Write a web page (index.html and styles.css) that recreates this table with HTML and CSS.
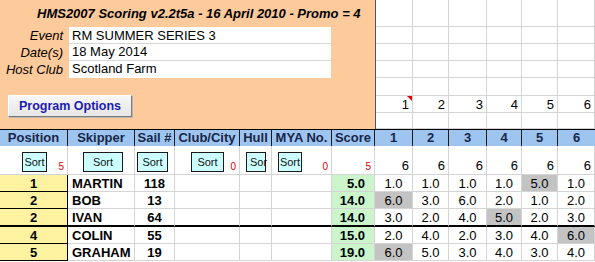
FILE: index.html
```html
<!DOCTYPE html>
<html lang="en">
<head>
<meta charset="utf-8">
<title>HMS2007 Scoring</title>
<link rel="stylesheet" href="styles.css">
</head>
<body>
<div class="sheet">
  <div class="top">
    <div class="panel">
      <div class="title">HMS2007 Scoring v2.2t5a - 16 April 2010 - Promo = 4</div>
      <div class="info">
        <div class="info-row"><span class="label">Event</span><span class="value">RM SUMMER SERIES 3</span></div>
        <div class="info-row"><span class="label">Date(s)</span><span class="value">18 May 2014</span></div>
        <div class="info-row"><span class="label">Host Club</span><span class="value">Scotland Farm</span></div>
      </div>
      <button class="options">Program Options</button>
    </div>
    <div class="races">
      <div class="gc"></div><div class="gc"></div><div class="gc"></div><div class="gc"></div><div class="gc"></div><div class="gc"></div>
      <div class="gc"></div><div class="gc"></div><div class="gc"></div><div class="gc"></div><div class="gc"></div><div class="gc"></div>
      <div class="gc"></div><div class="gc"></div><div class="gc"></div><div class="gc"></div><div class="gc"></div><div class="gc"></div>
      <div class="gc"></div><div class="gc"></div><div class="gc"></div><div class="gc"></div><div class="gc"></div><div class="gc"></div>
      <div class="gc"></div><div class="gc"></div><div class="gc"></div><div class="gc"></div><div class="gc"></div><div class="gc"></div>
      <div class="gc num comment">1</div><div class="gc num">2</div><div class="gc num">3</div><div class="gc num">4</div><div class="gc num">5</div><div class="gc num">6</div>
      <div class="gc"></div><div class="gc"></div><div class="gc"></div><div class="gc"></div><div class="gc"></div><div class="gc"></div>
    </div>
  </div>

  <div class="table">
    <div class="row head">
      <div class="hc">Position</div>
      <div class="hc">Skipper</div>
      <div class="hc">Sail #</div>
      <div class="hc">Club/City</div>
      <div class="hc">Hull</div>
      <div class="hc">MYA No.</div>
      <div class="hc">Score</div>
      <div class="hc">1</div>
      <div class="hc">2</div>
      <div class="hc">3</div>
      <div class="hc">4</div>
      <div class="hc">5</div>
      <div class="hc">6</div>
    </div>

    <div class="row sorts">
      <div class="sc"><button class="sort btn-pos">Sort</button><span class="mark">5</span></div>
      <div class="sc"><button class="sort btn-skip">Sort</button></div>
      <div class="sc"><button class="sort btn-sail">Sort</button></div>
      <div class="sc"><button class="sort btn-club">Sort</button><span class="mark">0</span></div>
      <div class="sc"><button class="sort btn-hull">Sor</button></div>
      <div class="sc"><button class="sort btn-mya">Sort</button><span class="mark">0</span></div>
      <div class="sc"><span class="mark">5</span></div>
      <div class="sc"><span class="count">6</span></div>
      <div class="sc"><span class="count">6</span></div>
      <div class="sc"><span class="count">6</span></div>
      <div class="sc"><span class="count">6</span></div>
      <div class="sc"><span class="count">6</span></div>
      <div class="sc"><span class="count">6</span></div>
    </div>

    <div class="row data">
      <div class="c pos">1</div><div class="c name">MARTIN</div><div class="c sail">118</div>
      <div class="c"></div><div class="c"></div><div class="c"></div><div class="c score">5.0</div>
      <div class="c r">1.0</div><div class="c r">1.0</div><div class="c r">1.0</div><div class="c r">1.0</div><div class="c r drop">5.0</div><div class="c r">1.0</div>
    </div>
    <div class="row data">
      <div class="c pos">2</div><div class="c name">BOB</div><div class="c sail">13</div>
      <div class="c"></div><div class="c"></div><div class="c"></div><div class="c score">14.0</div>
      <div class="c r drop">6.0</div><div class="c r">3.0</div><div class="c r">6.0</div><div class="c r">2.0</div><div class="c r">1.0</div><div class="c r">2.0</div>
    </div>
    <div class="row data split">
      <div class="c pos">2</div><div class="c name">IVAN</div><div class="c sail">64</div>
      <div class="c"></div><div class="c"></div><div class="c"></div><div class="c score">14.0</div>
      <div class="c r">3.0</div><div class="c r">2.0</div><div class="c r">4.0</div><div class="c r drop">5.0</div><div class="c r">2.0</div><div class="c r">3.0</div>
    </div>
    <div class="row data">
      <div class="c pos">4</div><div class="c name">COLIN</div><div class="c sail">55</div>
      <div class="c"></div><div class="c"></div><div class="c"></div><div class="c score">15.0</div>
      <div class="c r">2.0</div><div class="c r">4.0</div><div class="c r">2.0</div><div class="c r">3.0</div><div class="c r">4.0</div><div class="c r drop">6.0</div>
    </div>
    <div class="row data">
      <div class="c pos">5</div><div class="c name">GRAHAM</div><div class="c sail">19</div>
      <div class="c"></div><div class="c"></div><div class="c"></div><div class="c score">19.0</div>
      <div class="c r drop">6.0</div><div class="c r">5.0</div><div class="c r">3.0</div><div class="c r">4.0</div><div class="c r">3.0</div><div class="c r">4.0</div>
    </div>
  </div>
</div>
</body>
</html>
```

FILE: styles.css
```css
* { box-sizing: border-box; }

html, body {
  margin: 0;
  padding: 0;
  background: #ffffff;
}

.sheet {
  width: 595px;
  height: 262px;
  overflow: hidden;
  font-family: "Liberation Sans", Arial, sans-serif;
  font-size: 13px;
  color: #000;
}

/* ---------- upper block: orange event panel + race number grid ---------- */
.top {
  display: flex;
  height: 129px;
}

.panel {
  width: 376px;
  flex: none;
  background: #fdca9b;
  border-right: 1px solid #555;
  display: flex;
  flex-direction: column;
  align-items: flex-start;
}

.title {
  height: 27px;
  padding: 7px 0 0 37px;
  font-weight: bold;
  font-style: italic;
  font-size: 13px;
  line-height: 13px;
  white-space: nowrap;
}

.info {
  display: flex;
  flex-direction: column;
}

.info-row {
  display: flex;
  height: 17px;
}

.label {
  width: 63px;
  text-align: right;
  font-style: italic;
  line-height: 17px;
}

.value {
  width: 262px;
  margin-left: 6px;
  padding-left: 3px;
  background: #fff;
  line-height: 16px;
  border-bottom: 1px solid #d6d6d6;
}

.info-row:first-child .value { padding-top: 1px; }
.info-row:last-child .value { border-bottom: none; }

.options {
  margin: 17px 0 0 8px;
  width: 124px;
  height: 22px;
  padding: 0;
  font-family: "Liberation Sans", Arial, sans-serif;
  font-size: 12.5px;
  font-weight: bold;
  color: #1c1cb0;
  background: linear-gradient(#f7f7f7, #e6e6e6);
  border: 1px solid;
  border-color: #ffffff #7a7a7a #7a7a7a #ffffff;
  box-shadow: 1px 1px 0 #b8b8b8;
}

.races {
  display: grid;
  grid-template-columns: 37px 36px 38px 35px 36px 37px;
  grid-template-rows: 27px 17px 17px 17px 18px 17px 16px;
}

.gc {
  border-right: 1px solid #d4d4d4;
  border-bottom: 1px solid #d4d4d4;
}

.gc.num {
  text-align: right;
  padding-right: 3px;
  line-height: 17px;
  position: relative;
}

/* red comment marker in the corner of a cell */
.comment::after {
  content: "";
  position: absolute;
  top: 0;
  right: 0;
  border-top: 5px solid #e00000;
  border-left: 5px solid transparent;
}

/* ---------- results table ---------- */
.row {
  display: grid;
  grid-template-columns: 68px 67px 40px 65px 32px 60px 43px 38px 36px 38px 35px 36px 37px;
}

.head {
  height: 17px;
  border-top: 1px solid #000;
  background: #9ec5f0;
}

.hc {
  text-align: center;
  font-weight: bold;
  font-size: 13px;
  line-height: 16px;
  color: #17264a;
  border-right: 1px solid #1a1a1a;
  white-space: nowrap;
  overflow: hidden;
}

.hc:last-child { border-right: none; }

.sorts { height: 29px; }

.sc {
  display: flex;
  align-items: flex-start;
  padding-top: 6px;
  border-right: 1px solid #d4d4d4;
  border-bottom: 1px solid #d4d4d4;
}

.sort {
  flex: none;
  height: 20px;
  padding: 0;
  font-family: "Liberation Sans", Arial, sans-serif;
  font-size: 11px;
  color: #111;
  background: #ccffff;
  border: 1px solid #1a1a1a;
  white-space: nowrap;
}

.btn-pos  { margin-left: 22px; width: 25px; }
.btn-skip { margin-left: 15px; width: 40px; }
.btn-sail { margin-left: 2px;  width: 31px; }
.btn-club { margin-left: 16px; width: 33px; }
.btn-hull { margin-left: 6px;  width: 20px; text-align: left; padding-left: 3px; }
.btn-mya  { margin-left: 6px;  width: 24px; }

.mark {
  margin-left: auto;
  align-self: flex-end;
  padding: 0 3px 2px 0;
  font-size: 10px;
  line-height: 10px;
  color: #e00000;
}

.count {
  margin-left: auto;
  align-self: flex-end;
  padding: 0 3px 1px 0;
  line-height: 14px;
}

.data { height: 17px; }
.data.split { height: 18px; }

.c {
  padding-top: 1px;
  line-height: 15px;
  border-right: 1px solid #d4d4d4;
  border-bottom: 1px solid #d4d4d4;
  white-space: nowrap;
}

.split .c { border-bottom: 2px solid #000; }

.pos {
  text-align: center;
  font-weight: bold;
  background: #fff2a0;
  border-right: 1px solid #000;
  border-bottom: 1px solid #000;
}

.name {
  padding-left: 4px;
  font-weight: bold;
}

.sail {
  text-align: center;
  font-weight: bold;
}

.score {
  text-align: right;
  padding-right: 9px;
  font-weight: bold;
  background: #ccf5cc;
}

.r { text-align: center; }

.drop { background: #c3c3c3; }
```
